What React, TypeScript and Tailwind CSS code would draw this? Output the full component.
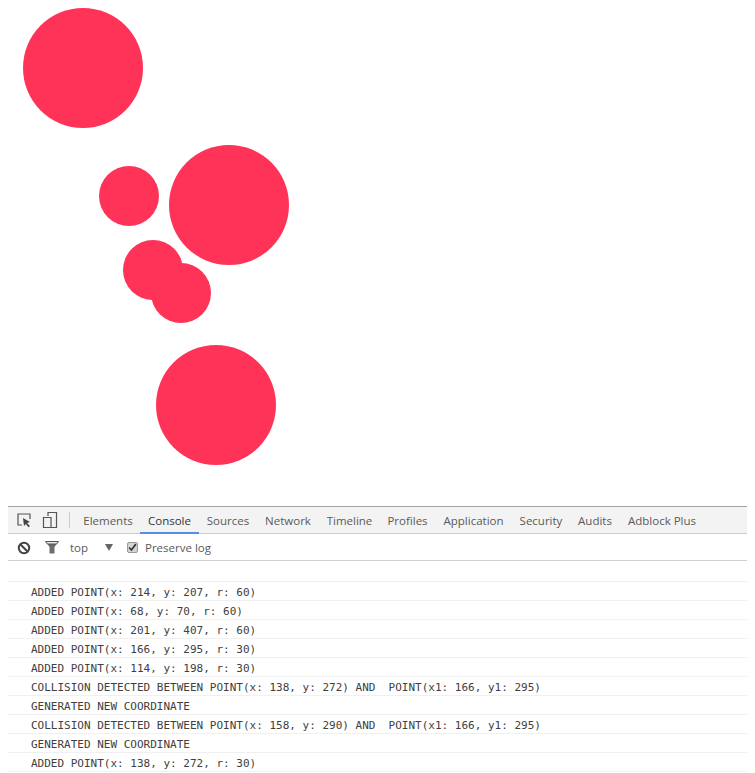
const circles = [
  { x: 83, y: 68, r: 60 },
  { x: 229, y: 205, r: 60 },
  { x: 129, y: 196, r: 30 },
  { x: 153, y: 270, r: 30 },
  { x: 181, y: 293, r: 30 },
  { x: 216, y: 405, r: 60 },
];

const tabs = [
  ["Elements", "w-[64px]"],
  ["Console", "w-[59px]"],
  ["Sources", "w-[58px]"],
  ["Network", "w-[62px]"],
  ["Timeline", "w-[61px]"],
  ["Profiles", "w-[55px]"],
  ["Application", "w-[77px]"],
  ["Security", "w-[58px]"],
  ["Audits", "w-[50px]"],
  ["Adblock Plus", "w-[84px]"],
];

const logs = [
  "ADDED POINT(x: 214, y: 207, r: 60)",
  "ADDED POINT(x: 68, y: 70, r: 60)",
  "ADDED POINT(x: 201, y: 407, r: 60)",
  "ADDED POINT(x: 166, y: 295, r: 30)",
  "ADDED POINT(x: 114, y: 198, r: 30)",
  "COLLISION DETECTED BETWEEN POINT(x: 138, y: 272) AND  POINT(x1: 166, y1: 295)",
  "GENERATED NEW COORDINATE",
  "COLLISION DETECTED BETWEEN POINT(x: 158, y: 290) AND  POINT(x1: 166, y1: 295)",
  "GENERATED NEW COORDINATE",
  "ADDED POINT(x: 138, y: 272, r: 30)",
];

export default function App() {
  return (
    <div className="h-[773px] w-[755px] overflow-hidden bg-white">
      <div className="relative h-[506px]">
        {circles.map((c, i) => (
          <div
            key={i}
            className="absolute rounded-full bg-[#ff3358]"
            style={{ left: c.x - c.r, top: c.y - c.r, width: c.r * 2, height: c.r * 2 }}
          />
        ))}
      </div>
      <div className="mx-2 w-[739px] font-['Open_Sans',sans-serif] text-[11.5px] text-[#5a5a5a]">
        <div className="flex h-[28px] items-center border-y border-y-[#a3a3a3] border-b-[#cccccc] bg-[#f3f3f3]">
          <svg width="16" height="16" viewBox="0 0 16 16" className="ml-[8px]" fill="none">
            <path d="M6 13H2V2h12v5" stroke="#555" strokeWidth="1.2" />
            <path d="M7 6l7 4-3 1 3 3-1.5 1.2-2.7-3.2L8 14z" fill="#444" />
          </svg>
          <svg width="16" height="18" viewBox="0 0 16 18" className="ml-[10px]" fill="none">
            <path d="M6 5V1.5h8.5v15H6M1.500 6.500H9V16.500H1.500z" stroke="#555" strokeWidth="1.200" />
          </svg>
          <div className="ml-[11px] mr-[6px] h-[16px] w-px bg-[#cccccc]" />
          {tabs.map(([t, w]) => (
            <div
              key={t}
              className={`relative flex h-full shrink-0 items-center justify-center pt-[1px] ${w} ${t === "Console" ? "text-[#333333]" : ""}`}
            >
              {t}
              {t === "Console" && <div className="absolute bottom-[-1px] left-0 right-0 h-[2px] bg-[#5a8ce6]" />}
            </div>
          ))}
        </div>
        <div className="flex h-[27px] items-center border-b border-[#d0d0d0] bg-white pt-[1px]">
          <svg width="14" height="14" viewBox="0 0 14 14" className="ml-[9px]" fill="none">
            <circle cx="7" cy="7" r="5.200" stroke="#444" strokeWidth="2" />
            <path d="M3.300 3.300l7.400 7.400" stroke="#444" strokeWidth="2" />
          </svg>
          <svg width="14" height="13" viewBox="0 0 14 13" className="ml-[14px]">
            <path d="M0.500 0.500H13.500L9.500 6V12.500H4.500V6z" fill="#6e6e6e" />
            <path d="M0.500 0.500H13.500L11.500 3H2.500z" fill="#e8e8e8" stroke="#555" strokeWidth="1" />
          </svg>
          <span className="ml-[11px] w-[35px]">top</span>
          <span className="h-0 w-0 border-x-[4.500px] border-t-[7px] border-x-transparent border-t-[#666]" />
          <span className="ml-[14px] flex h-[11px] w-[11px] items-center justify-center rounded-[2px] border border-[#999] bg-[#d4d4d4]">
            <svg width="9" height="9" viewBox="0 0 8 8" fill="none">
              <path d="M1 4l2 2.200L7 1" stroke="#333" strokeWidth="1.500" />
            </svg>
          </span>
          <span className="ml-[7px]">Preserve log</span>
        </div>
        <div className="h-[20px]" />
        <div className="font-['DejaVu_Sans_Mono',monospace] text-[11px] text-[#404040]">
          {logs.map((l, i) => (
            <div
              key={i}
              className="flex h-[19px] items-center whitespace-pre border-t border-[#f0f0f0] pl-[23px] pt-[5px] last:border-b last:h-[20px]"
            >
              {l}
            </div>
          ))}
        </div>
      </div>
    </div>
  );
}
